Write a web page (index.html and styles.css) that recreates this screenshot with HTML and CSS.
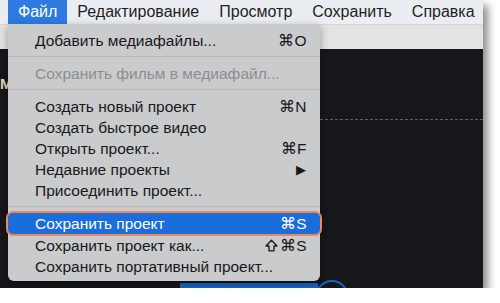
FILE: index.html
```html
<!DOCTYPE html>
<html lang="ru">
<head>
	<meta charset="UTF-8">
	<title>Файл</title>
	<link rel="stylesheet" href="styles.css">
</head>
<body>
	<div class="shot">
		<nav class="menubar">
			<span class="menubar-item active">Файл</span>
			<span class="menubar-item">Редактирование</span>
			<span class="menubar-item">Просмотр</span>
			<span class="menubar-item">Сохранить</span>
			<span class="menubar-item">Справка</span>
		</nav>
		<div class="app">
			<div class="toolbar"></div>
			<div class="workspace">
				<span class="side-label">М</span>
				<div class="dashed"></div>
				<div class="bottom-bar"></div>
				<div class="bottom-arc"></div>
			</div>

			<ul class="dropdown">
				<li class="item"><span>Добавить медиафайлы...</span><span class="key">⌘O</span></li>
				<li class="sep"></li>
				<li class="item disabled"><span>Сохранить фильм в медиафайл...</span></li>
				<li class="sep"></li>
				<li class="item"><span>Создать новый проект</span><span class="key">⌘N</span></li>
				<li class="item"><span>Создать быстрое видео</span></li>
				<li class="item"><span>Открыть проект...</span><span class="key">⌘F</span></li>
				<li class="item"><span>Недавние проекты</span><span class="key arrow">▶</span></li>
				<li class="item"><span>Присоединить проект...</span></li>
				<li class="sep"></li>
				<li class="item selected"><span>Сохранить проект</span><span class="key">⌘S</span></li>
				<li class="item"><span>Сохранить проект как...</span><span class="key"><svg class="shift" width="13" height="13" viewBox="0 0 13 13"><path d="M6.5 1.2 L12 7 H9 V11.8 H4 V7 H1 Z" fill="none" stroke="#18181a" stroke-width="1.3" stroke-linejoin="round"/></svg>⌘S</span></li>
				<li class="item"><span>Сохранить портативный проект...</span></li>
			</ul>
		</div>
	</div>
</body>
</html>
```

FILE: styles.css
```css
body {
	margin: 0;
	background: #ffffff;
	font-family: "Liberation Sans", Arial, sans-serif;
	color: #1b1b1d;
}

.shot {
	width: 483px;
	height: 288px;
	position: relative;
	overflow: hidden;
	box-shadow: 5px 5px 8px rgba(0, 0, 0, 0.45);
}

.menubar {
	display: flex;
	height: 24px;
	align-items: stretch;
	padding-left: 8px;
	background: #eaedf1;
	font-size: 16px;
}

.menubar-item {
	display: flex;
	align-items: center;
	padding: 0 10px;
	color: #1f1f22;
}

.menubar-item.active {
	background: #2d7be0;
	color: #ffffff;
}

.app {
	position: relative;
	height: 264px;
	display: flex;
	flex-direction: column;
}

.toolbar {
	height: 24px;
	background: #e3e3e3;
	border-top: 1px solid #d6d6d6;
}

.workspace {
	flex: 1;
	position: relative;
	background: #16171b;
}

.side-label {
	position: absolute;
	left: 0;
	top: 26px;
	font-size: 15px;
	font-weight: bold;
	color: #efd1b4;
}

.dashed {
	position: absolute;
	left: 320px;
	right: 0;
	top: 70px;
	border-top: 1px dashed #5d606a;
}

.bottom-bar {
	position: absolute;
	left: 180px;
	width: 138px;
	bottom: 0;
	height: 5px;
	background: #1866c4;
}

.bottom-arc {
	position: absolute;
	left: 316px;
	bottom: -22px;
	width: 28px;
	height: 26px;
	border: 2px solid #1866c4;
	border-radius: 50%;
}

.dropdown {
	position: absolute;
	left: 8px;
	top: 0;
	width: 312px;
	margin: 0;
	padding: 6px 0 4px;
	list-style: none;
	background: #cacbcd;
	border-radius: 0 0 6px 6px;
	box-shadow: 0 3px 8px rgba(0, 0, 0, 0.35);
	font-size: 15.5px;
}

.item {
	display: flex;
	justify-content: space-between;
	align-items: center;
	height: 21px;
	padding: 0 13px 0 27px;
	color: #18181a;
}

.item.disabled {
	color: #8d8e90;
}

.item.selected {
	background: #1a6ddb;
	color: #ffffff;
	border-radius: 5px;
	box-shadow: 0 0 0 2px #f0845a;
	margin: 3px 0 1px;
}

.key {
	display: flex;
	align-items: center;
	letter-spacing: 0.5px;
}

.shift {
	margin-right: 2px;
}

.arrow {
	font-size: 13px;
	padding-right: 1px;
}

.sep {
	height: 1px;
	margin: 5px 0 6px;
	background: #b7b8ba;
}
```
